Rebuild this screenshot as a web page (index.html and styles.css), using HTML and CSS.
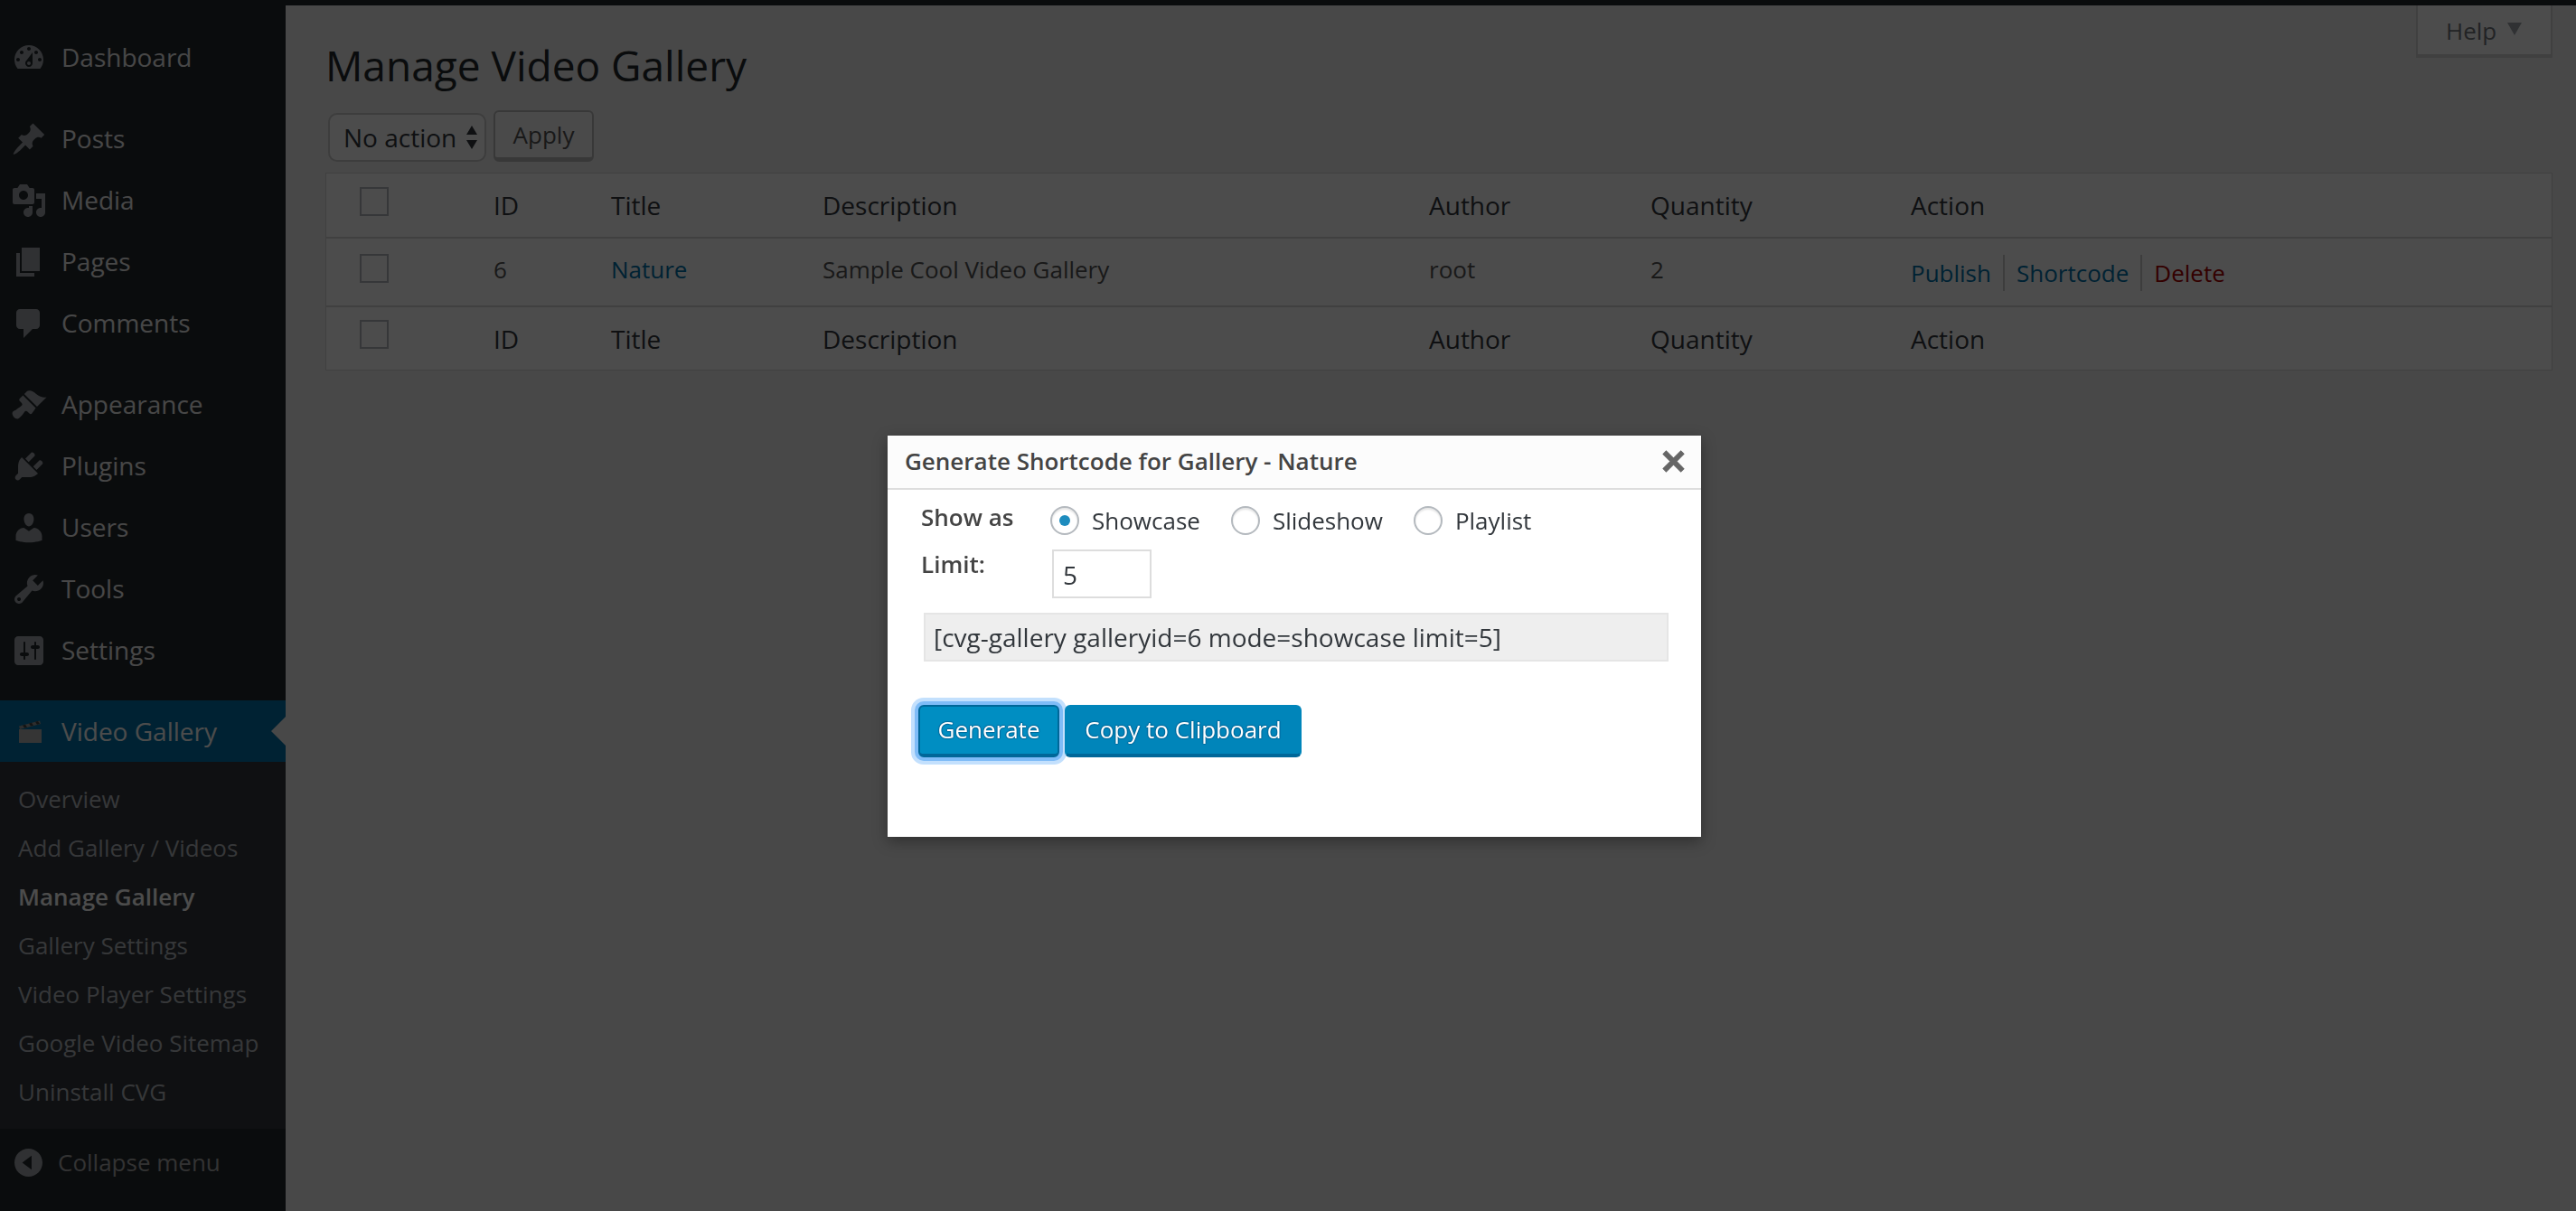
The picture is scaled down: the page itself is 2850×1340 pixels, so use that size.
FILE: index.html
```html
<!DOCTYPE html>
<html lang="en">
<head>
<meta charset="utf-8">
<title>Manage Video Gallery</title>
<link rel="stylesheet" href="styles.css">
</head>
<body>
<div class="adminbar"></div>
<div class="shell">
  <aside class="sidebar">
    <nav class="menu">
      <a class="item"><svg class="ico" viewBox="0 0 20 20"><path d="M3.76 16h12.48c1.1-1.37 1.76-3.11 1.76-5 0-4.42-3.58-8-8-8s-8 3.58-8 8c0 1.89.66 3.63 1.76 5zM10 4c.55 0 1 .45 1 1s-.45 1-1 1-1-.45-1-1 .45-1 1-1zM6 6c.55 0 1 .45 1 1s-.45 1-1 1-1-.45-1-1 .45-1 1-1zm8 0c.55 0 1 .45 1 1s-.45 1-1 1-1-.45-1-1 .45-1 1-1zm-5.37 5.55L12 7v6c0 1.1-.9 2-2 2s-2-.9-2-2c0-.57.24-1.08.63-1.45zM4 10c.55 0 1 .45 1 1s-.45 1-1 1-1-.45-1-1 .45-1 1-1zm12 0c.55 0 1 .45 1 1s-.45 1-1 1-1-.45-1-1 .45-1 1-1zm-5 3c0-.55-.45-1-1-1s-1 .45-1 1 .45 1 1 1 1-.45 1-1z"/></svg>Dashboard</a>
      <div class="sep"></div>
      <a class="item"><svg class="ico" viewBox="0 0 20 20"><path d="M10.44 3.02l1.82-1.82 6.36 6.35-1.83 1.82c-1.05-.68-2.48-.57-3.41.36l-.75.75c-.92.93-1.04 2.35-.35 3.41l-1.83 1.82-2.41-2.41-2.8 2.79c-.42.42-3.38 2.71-3.8 2.29s1.86-3.39 2.28-3.81l2.79-2.79L4.1 9.36l1.83-1.82c1.05.69 2.48.57 3.4-.36l.75-.75c.93-.92 1.05-2.35.36-3.41z"/></svg>Posts</a>
      <a class="item"><svg class="ico" viewBox="0 0 20 20"><path d="M13 11V4c0-.55-.45-1-1-1h-1.67L9 1H5L3.67 3H2c-.55 0-1 .45-1 1v7c0 .55.45 1 1 1h10c.55 0 1-.45 1-1zM7 4.5c1.38 0 2.5 1.12 2.5 2.5S8.38 9.5 7 9.5 4.5 8.38 4.5 7 5.62 4.5 7 4.5zM14 6h5v10.5c0 1.38-1.12 2.5-2.5 2.5S14 17.88 14 16.5s1.12-2.5 2.5-2.5c.17 0 .34.02.5.05V9h-3V6zm-4 8.05V13h2v3.5c0 1.38-1.12 2.5-2.5 2.5S7 17.88 7 16.5 8.12 14 9.5 14c.17 0 .34.02.5.05z"/></svg>Media</a>
      <a class="item"><svg class="ico" viewBox="0 0 20 20"><path d="M6 15V2h10v13H6zm-1 1h8v2H3V5h2v11z"/></svg>Pages</a>
      <a class="item"><svg class="ico" viewBox="0 0 20 20"><path d="M5 2h9c1.1 0 2 .9 2 2v7c0 1.1-.9 2-2 2h-2l-5 5v-5H5c-1.1 0-2-.9-2-2V4c0-1.1.9-2 2-2z"/></svg>Comments</a>
      <div class="sep"></div>
      <a class="item"><svg class="ico" viewBox="0 0 20 20"><path d="M14.48 11.06L7.41 3.99l1.5-1.5c.5-.56 2.3-.47 3.51.32 1.21.8 1.43 1.28 2.91 2.1 1.18.64 2.45 1.26 4.45.85zm-.71.71L6.7 4.7 4.93 6.47c-.39.39-.39 1.02 0 1.41l1.06 1.06c.39.39.39 1.03 0 1.42-.6.6-1.43 1.11-2.21 1.69-.35.26-.7.53-1.01.84C1.43 13.23.4 14.08 1 15.6c.2.6.76 1.42 1.6 1.9.43.22 1.33.4 1.9-.13 1.53-1.41 2.05-1.9 3.06-3.53.27-.43 1.11-.66 1.64-.13l1.06 1.06c.39.39 1.02.39 1.41 0z"/></svg>Appearance</a>
      <a class="item"><svg class="ico" viewBox="0 0 20 20"><path d="M13.11 4.36L9.87 7.6 8 5.73l3.24-3.24c.35-.34 1.05-.2 1.56.32.52.51.66 1.21.31 1.55zm-8 1.77l.91-1.12 9.01 9.01-1.19.84c-.71.71-2.63 1.16-3.82 1.16H6.14L4.9 17.26c-.59.59-1.54.59-2.12 0-.59-.58-.59-1.53 0-2.12l1.24-1.24v-3.88c0-1.13.4-3.19 1.09-3.89zm7.26 3.97l3.24-3.24c.34-.35 1.04-.21 1.55.31.52.51.66 1.21.31 1.55l-3.24 3.25z"/></svg>Plugins</a>
      <a class="item"><svg class="ico" viewBox="0 0 20 20"><path d="M10 9.25c-2.27 0-2.73-3.44-2.73-3.44C7 4.02 7.82 2 9.97 2c2.16 0 2.98 2.02 2.71 3.81 0 0-.41 3.44-2.68 3.44zm0 2.57L12.72 10c2.39 0 4.52 2.33 4.52 4.53v2.49s-3.65 1.13-7.24 1.13c-3.65 0-7.24-1.13-7.24-1.13v-2.49c0-2.25 1.94-4.48 4.47-4.48z"/></svg>Users</a>
      <a class="item"><svg class="ico" viewBox="0 0 20 20"><path d="M16.68 9.77c-1.34 1.34-3.3 1.67-4.95.99l-5.41 6.52c-.99.99-2.59.99-3.58 0s-.99-2.59 0-3.57l6.52-5.42c-.68-1.65-.35-3.61.99-4.95 1.28-1.28 3.12-1.62 4.72-1.06l-2.89 2.89 2.82 2.82 2.86-2.87c.53 1.58.18 3.39-1.08 4.65zM3.81 16.21c.4.39 1.04.39 1.43 0 .4-.4.4-1.04 0-1.43-.39-.4-1.03-.4-1.43 0-.39.39-.39 1.03 0 1.43z"/></svg>Tools</a>
      <a class="item"><svg class="ico" viewBox="0 0 20 20"><path d="M18 16V4c0-1.1-.9-2-2-2H4c-1.1 0-2 .9-2 2v12c0 1.1.9 2 2 2h12c1.1 0 2-.9 2-2zM8 11h1c.55 0 1 .45 1 1s-.45 1-1 1H8v1.5c0 .28-.22.5-.5.5s-.5-.22-.5-.5V13H6c-.55 0-1-.45-1-1s.45-1 1-1h1V5.5c0-.28.22-.5.5-.5s.5.22.5.5V11zm5-2h-1c-.55 0-1-.45-1-1s.45-1 1-1h1V5.5c0-.28.22-.5.5-.5s.5.22.5.5V7h1c.55 0 1 .45 1 1s-.45 1-1 1h-1v5.5c0 .28-.22.5-.5.5s-.5-.22-.5-.5V9z"/></svg>Settings</a>
      <div class="sep sep-last"></div>
      <a class="item current"><svg class="clap" viewBox="0 0 28 28"><path class="clap-top" d="M2 8.5 L25 2.5 L26 6 L3 12 Z"/><path class="clap-stripe" d="M6 7.5l3-.8 2 3-3 .8zM13 5.6l3-.8 2 3-3 .8zM20 3.8l3-.8 2 3-3 .8z"/><rect class="clap-body" x="2" y="12" width="25" height="15"/></svg>Video Gallery</a>
      <ul class="submenu">
        <li>Overview</li>
        <li>Add Gallery / Videos</li>
        <li class="active">Manage Gallery</li>
        <li>Gallery Settings</li>
        <li>Video Player Settings</li>
        <li>Google Video Sitemap</li>
        <li>Uninstall CVG</li>
      </ul>
      <a class="collapse"><svg class="collapse-ico" viewBox="1 1 18 18"><path d="M10 1c-4.97 0-9 4.03-9 9s4.03 9 9 9 9-4.03 9-9-4.03-9-9-9zm2 4.5v9L6 10z"/></svg>Collapse menu</a>
    </nav>
  </aside>
  <main class="main">
    <header class="head">
      <h1 class="title">Manage Video Gallery</h1>
      <div class="help">Help<span class="help-arrow"></span></div>
    </header>
    <div class="toolbar">
      <div class="select">No action<svg class="updown" viewBox="0 0 12 26"><path d="M6 0l6 10H0zM0 16h12L6 26z"/></svg></div>
      <button class="apply" type="button">Apply</button>
    </div>
    <section class="table">
      <div class="row row-head">
        <span class="check"></span><span>ID</span><span>Title</span><span>Description</span><span>Author</span><span>Quantity</span><span>Action</span>
      </div>
      <div class="row row-body">
        <span class="check"></span><span>6</span><a class="link">Nature</a><span>Sample Cool Video Gallery</span><span>root</span><span>2</span>
        <span class="actions"><a class="link">Publish</a><i class="bar"></i><a class="link">Shortcode</a><i class="bar"></i><a class="del">Delete</a></span>
      </div>
      <div class="row row-foot">
        <span class="check"></span><span>ID</span><span>Title</span><span>Description</span><span>Author</span><span>Quantity</span><span>Action</span>
      </div>
    </section>
  </main>
</div>
<div class="overlay"></div>
<div class="dialog">
  <div class="dialog-head">
    <span class="dialog-title">Generate Shortcode for Gallery - Nature</span>
    <svg class="close" viewBox="5 5 10 10"><path d="M14.95 6.46L11.41 10l3.54 3.54-1.41 1.41L10 11.42l-3.53 3.53-1.42-1.42L8.58 10 5.05 6.47l1.42-1.42L10 8.58l3.54-3.53z"/></svg>
  </div>
  <div class="dialog-body">
    <div class="form-row row-show">
      <span class="label">Show as</span>
      <div class="radios">
        <label class="radio-item"><span class="radio on"></span>Showcase</label>
        <label class="radio-item"><span class="radio"></span>Slideshow</label>
        <label class="radio-item"><span class="radio"></span>Playlist</label>
      </div>
    </div>
    <div class="form-row row-limit">
      <span class="label">Limit:</span>
      <div class="limit">5</div>
    </div>
    <div class="code">[cvg-gallery galleryid=6 mode=showcase limit=5]</div>
    <div class="buttons">
      <button class="btn btn-focus" type="button">Generate</button>
      <button class="btn btn-copy" type="button">Copy to Clipboard</button>
    </div>
  </div>
</div>
</body>
</html>
```

FILE: styles.css
```css
* { box-sizing: border-box; }
html, body { margin: 0; padding: 0; height: 100%; }
body {
  width: 2850px;
  height: 1340px;
  overflow: hidden;
  background: #f1f1f1;
  font-family: "Open Sans", "Noto Sans", sans-serif;
  color: #444;
  display: flex;
  flex-direction: column;
}
.adminbar { height: 6px; background: #23282d; flex: none; }
.shell { flex: 1; display: flex; min-height: 0; }

/* sidebar */
.sidebar { width: 316px; flex: none; background: #23282d; }
.menu { display: flex; flex-direction: column; padding-top: 23px; }
.item {
  height: 68px;
  display: flex;
  align-items: center;
  font-size: 28px;
  color: #eee;
  position: relative;
}
.ico {
  width: 40px;
  height: 40px;
  margin: 2px 16px 0 12px;
  fill: #a0a5aa;
  flex: none;
}
.sep { height: 22px; }
.sep-last { height: 22px; }
.current { background: #0073aa; color: #fff; }
.current::after {
  content: "";
  position: absolute;
  right: 0;
  top: 18px;
  border: 16px solid transparent;
  border-left-width: 0;
  border-right-color: #f1f1f1;
}
.clap { width: 28px; height: 28px; margin: 0 21px 0 19px; flex: none; }
.clap-top { fill: #999; }
.clap-stripe { fill: #444; }
.clap-body { fill: #b2b2b2; }
.submenu {
  list-style: none;
  margin: 0;
  padding: 14px 0;
  background: #32373c;
  font-size: 26px;
  color: #b4b9be;
}
.submenu li { height: 54px; line-height: 54px; padding-left: 20px; }
.submenu .active { color: #fff; font-weight: 600; }
.collapse {
  display: flex;
  align-items: center;
  height: 40px;
  margin-top: 17px;
  font-size: 26px;
  color: #aaa;
}
.collapse-ico { width: 31px; height: 31px; margin: 0 17px 0 16px; fill: #a0a5aa; flex: none; }

/* main */
.main { flex: 1; padding: 0 26px 0 44px; min-width: 0; }
.head { display: flex; justify-content: space-between; align-items: flex-start; height: 116px; }
.title {
  margin: 36px 0 0;
  font-size: 46px;
  line-height: 60px;
  font-weight: 400;
  color: #23282d;
}
.help {
  width: 151px;
  height: 56px;
  background: #fff;
  border: 2px solid #d8d8d8;
  border-top: 0;
  box-shadow: 0 2px 0 rgba(0,0,0,.1);
  font-size: 26px;
  color: #72777c;
  display: flex;
  align-items: center;
  padding: 2px 0 0 31px;
}
.help-arrow {
  margin-left: 12px;
  border: 8px solid transparent;
  border-top: 14px solid #a0a5aa;
  border-bottom: 0;
  margin-top: -4px;
}
.toolbar { display: flex; align-items: flex-end; gap: 8px; padding-left: 3px; height: 57px; }
.select {
  width: 175px;
  height: 54px;
  border: 2px solid #ccc;
  border-radius: 10px;
  background: #fff;
  font-size: 28px;
  color: #32373c;
  display: flex;
  align-items: center;
  justify-content: space-between;
  padding: 0 8px 0 15px;
}
.updown { width: 12px; height: 26px; fill: #32373c; }
.apply {
  width: 111px;
  height: 57px;
  border: 2px solid #bbb;
  border-bottom-width: 5px;
  border-radius: 6px;
  background: #f7f7f7;
  font: 26px/1 "Open Sans", sans-serif;
  color: #555;
  padding: 0;
}
.table {
  margin-top: 12px;
  background: #fff;
  border: 1px solid #d8d8d8;
  height: 219px;
}
.row {
  display: grid;
  grid-template-columns: 148px 130px 234px 671px 245px 288px 1fr;
  align-items: center;
  padding-left: 37px;
}
.row-head { height: 72px; border-bottom: 2px solid #d8d8d8; font-size: 28px; color: #32373c; }
.row-body { height: 76px; border-bottom: 2px solid #d8d8d8; font-size: 26px; color: #555; }
.row-foot { height: 69px; font-size: 28px; color: #32373c; }
.row-body > span, .row-body > a { margin-bottom: 6px; }
.row > .check {
  width: 32px;
  height: 32px;
  margin: 0 0 9px;
  border: 2px solid #b4b9be;
  background: #fff;
}
.link { color: #0073aa; }
.del { color: #a00; }
.row-body > .actions { display: flex; align-items: center; margin: 2px 0 0; }
.bar { width: 2px; height: 40px; background: #ccc; margin: 0 13px; }

/* dialog */
.overlay { position: fixed; inset: 0; background: rgba(0,0,0,.7); }
.dialog {
  position: absolute;
  left: 982px;
  top: 482px;
  width: 900px;
  background: #fff;
  box-shadow: 0 5px 15px rgba(0,0,0,.35);
}
.dialog-head {
  height: 60px;
  background: #fcfcfc;
  border-bottom: 2px solid #ddd;
  display: flex;
  align-items: center;
  justify-content: space-between;
  padding: 0 19px 2px 19px;
}
.dialog-title { font-size: 26px; font-weight: 600; color: #444; }
.close { width: 23px; height: 23px; fill: #666; stroke: #666; stroke-width: .5; overflow: visible; }
.dialog-body { padding: 12px 36px 88px 37px; }
.form-row { display: flex; align-items: flex-start; }
.row-show { height: 40px; }
.row-limit { height: 56px; margin-top: 12px; }
.label { width: 145px; font-size: 26px; line-height: 36px; font-weight: 600; color: #444; flex: none; }
.radios { display: flex; gap: 34px; margin: 6px 0 0 -2px; }
.radio-item { display: flex; align-items: center; font-size: 26px; line-height: 32px; color: #32373c; }
.radio {
  width: 32px;
  height: 32px;
  margin-right: 14px;
  border: 2px solid #b4b9be;
  border-radius: 50%;
  background: #fff;
  box-shadow: inset 0 2px 2px rgba(0,0,0,.1);
  display: flex;
  align-items: center;
  justify-content: center;
}
.radio.on::before {
  content: "";
  width: 12px;
  height: 12px;
  border-radius: 50%;
  background: #1e8cbe;
}
.limit {
  width: 110px;
  height: 54px;
  margin-top: 2px;
  border: 2px solid #ddd;
  font-size: 28px;
  line-height: 52px;
  color: #32373c;
  padding-left: 10px;
}
.code {
  width: 824px;
  height: 54px;
  margin: 16px 0 0 3px;
  background: #eee;
  border: 2px solid #e5e5e5;
  font-size: 28px;
  line-height: 50px;
  color: #32373c;
  padding-left: 9px;
  white-space: nowrap;
}
.buttons { display: flex; gap: 6px; margin: 48px 0 0 -3px; }
.btn {
  height: 58px;
  padding: 0 0 2px;
  background: #0085ba;
  border: 2px solid #0073aa;
  border-bottom: 4px solid #006799;
  border-radius: 6px;
  color: #fff;
  font: 26px/1 "Open Sans", sans-serif;
  text-shadow: 0 -1px 1px #006799, 1px 0 1px #006799, 0 1px 1px #006799, -1px 0 1px #006799;
}
.btn-focus {
  width: 156px;
  background: #008ec2;
  border-color: #006799;
  box-shadow: 0 0 0 4px #7fbcf7, 0 0 0 8px #c3e0fd;
}
.btn-copy { width: 262px; border-color: #0085ba #0085ba #006799; }
```
